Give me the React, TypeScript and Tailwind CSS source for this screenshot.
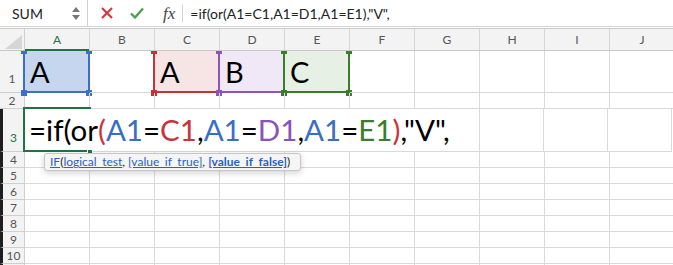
import type { ReactNode } from "react";

const cols = ["A", "B", "C", "D", "E", "F", "G", "H", "I", "J"];
const font = { fontFamily: "Lato, 'Open Sans', sans-serif" };

function Range({ line, fill }: { line: string; fill: string }) {
  // coloured reference box drawn over a cell while editing a formula
  return (
    <>
      <div className={`pointer-events-none absolute -left-[2px] -right-[1px] top-0 -bottom-[1px] border-2 border-t-0 ${line}`} />
      <span className={`absolute -left-[4px] top-0 h-[3px] w-[6px] ${fill}`} />
      <span className={`absolute -right-[3px] top-0 h-[3px] w-[6px] ${fill}`} />
      <span className={`absolute -left-[4px] -bottom-[4px] h-[6px] w-[6px] ${fill}`} />
      <span className={`absolute -right-[3px] -bottom-[4px] h-[6px] w-[6px] ${fill}`} />
    </>
  );
}

function RowHead({ n, h, active, edge, tall }: { n?: number; h: string; active?: boolean; edge?: boolean; tall?: boolean }) {
  return (
    <div
      className={`flex w-[25px] flex-none justify-center border-r border-b border-[#cfcfcf] bg-[#f3f3f3] text-[12px] leading-[14px] ${h} ${
        tall ? "items-end pb-[6px]" : "items-center"
      } ${active ? "text-[#217346]" : "text-[#555]"} ${edge ? "border-l-[3px] border-l-[#1e1e1e]" : ""}`}
    >
      {n}
    </div>
  );
}

function Cell({ className = "", children }: { className?: string; children?: ReactNode }) {
  return <div className={`relative w-[65px] flex-none border-b border-[#dadada] ${className}`}>{children}</div>;
}

function PlainRow({ n }: { n?: number }) {
  return (
    <div className="flex h-[16px]">
      <RowHead n={n} h="h-[16px]" edge />
      {cols.map((c) => (
        <Cell key={c} className="border-r" />
      ))}
    </div>
  );
}

const blue = "text-[#3a6ec6]";
const red = "text-[#c9333b]";
const purple = "text-[#8a52bd]";
const green = "text-[#3b7d2c]";

export default function App() {
  return (
    <div className="relative h-[265px] w-[673px] overflow-hidden bg-white text-[#222]" style={font}>
      {/* formula bar */}
      <div className="flex h-[27px] border-b border-[#d3d3d3]">
        <div className="flex w-[88px] flex-none items-center justify-between border-r border-[#cfcfcf] pl-[12px] pr-[7px] text-[14px]">
          <span>SUM</span>
          <span className="flex flex-col gap-[3px]">
            <svg width="8" height="5" viewBox="0 0 8 5">
              <path d="M4 0 L8 5 L0 5 Z" fill="#777" />
            </svg>
            <svg width="8" height="5" viewBox="0 0 8 5">
              <path d="M0 0 L8 0 L4 5 Z" fill="#777" />
            </svg>
          </span>
        </div>
        <div className="flex items-center pl-[13px]">
          <svg width="12" height="12" viewBox="0 0 12 12">
            <path d="M1 1 L11 11 M11 1 L1 11" stroke="#d5383e" strokeWidth="2.2" />
          </svg>
          <svg className="ml-[17px]" width="14" height="12" viewBox="0 0 14 12">
            <path d="M1 6.5 L5 10.5 L13 1.5" stroke="#4d9e52" strokeWidth="2.4" fill="none" />
          </svg>
          <span className="ml-[19px] text-[17px] italic leading-none text-[#444]" style={{ fontFamily: "'Liberation Serif', serif" }}>
            fx
          </span>
          <span className="ml-[7px] h-[17px] w-px bg-[#d3d3d3]" />
          <span className="ml-[7px] text-[14px] whitespace-nowrap">=if(or(A1=C1,A1=D1,A1=E1),"V",</span>
        </div>
      </div>
      <div className="h-[1px]" />

      {/* column headers */}
      <div className="flex h-[23px] border-y border-[#c8c8c8] bg-[#f3f3f3]">
        <div className="relative w-[25px] flex-none border-r border-[#cfcfcf]">
          <svg className="absolute left-[5px] top-[6px]" width="17" height="14" viewBox="0 0 17 14">
            <path d="M17 0 L17 14 L0 14 Z" fill="#d6d6d6" />
          </svg>
        </div>
        {cols.map((c) => (
          <div
            key={c}
            className={`relative flex w-[65px] flex-none items-center justify-center border-r border-[#d6d6d6] text-[12px] ${
              c === "A" ? "text-[#217346]" : "text-[#555]"
            }`}
          >
            {c}
            {c === "A" && <span className="absolute -bottom-[1px] left-0 right-0 h-[2px] bg-[#217346]" />}
          </div>
        ))}
      </div>

      {/* row 1 */}
      <div className="flex h-[42px] text-[29px] leading-none text-black">
        <RowHead n={1} h="h-[42px]" tall />
        <Cell className="flex items-end border-r bg-[#c6d6ef] pb-[6px] pl-[5px]">
          A
          <Range line="border-[#3c70c8]" fill="bg-[#3c70c8]" />
        </Cell>
        <Cell className="border-r" />
        <Cell className="flex items-end border-r bg-[#f7e5e5] pb-[6px] pl-[5px]">
          A
          <Range line="border-[#c8303a]" fill="bg-[#c8303a]" />
        </Cell>
        <Cell className="flex items-end border-r bg-[#f0e8f6] pb-[6px] pl-[5px]">
          B
          <Range line="border-[#8b55be]" fill="bg-[#8b55be]" />
        </Cell>
        <Cell className="flex items-end border-r bg-[#e7f0e4] pb-[6px] pl-[5px]">
          C
          <Range line="border-[#3b7d2c]" fill="bg-[#3b7d2c]" />
        </Cell>
        {cols.slice(5).map((c) => (
          <Cell key={c} className="border-r" />
        ))}
      </div>

      <div className="flex h-[16px]">
        <RowHead n={2} h="h-[16px]" />
        {cols.map((c) => (
          <Cell key={c} className="border-r" />
        ))}
      </div>

      {/* row 3: cell in edit mode */}
      <div className="flex h-[43px]">
        <RowHead n={3} h="h-[43px]" active edge tall />
        <Cell className="z-10 flex items-end pb-[7px] pl-[4px]">
          <span className="relative z-10 whitespace-nowrap text-[29.5px] leading-none text-black">
            =if(or<span className={red}>(</span>
            <span className={blue}>A1</span>=<span className={red}>C1</span>,<span className={blue}>A1</span>=
            <span className={purple}>D1</span>,<span className={blue}>A1</span>=<span className={green}>E1</span>
            <span className={red}>)</span>,"V",
          </span>
          <div className="absolute -left-[2px] -top-[2px] -bottom-[1px] w-[68px] border-2 border-r-0 border-[#217346]" />
          <span className="absolute -bottom-[4px] left-[62px] h-[6px] w-[6px] border border-white bg-[#217346]" />
        </Cell>
        {cols.slice(1, 7).map((c) => (
          <Cell key={c} />
        ))}
        {cols.slice(7).map((c) => (
          <Cell key={c} className="-ml-px border-l border-r" />
        ))}
      </div>

      {[4, 5, 6, 7, 8, 9, 10].map((n) => (
        <PlainRow key={n} n={n} />
      ))}
      <PlainRow />

      {/* function tooltip */}
      <div className="absolute left-[44px] top-[153px] z-20 flex h-[18px] w-[257px] items-center rounded-[3px] border border-[#c6c6c6] bg-[#f5f5f5] pl-[5px] text-[12px] whitespace-nowrap text-[#222] shadow-[0_2px_6px_rgba(0,0,0,0.18)]">
        <span className="text-[#2a62c4] underline">IF</span>(
        <span className="text-[#2a62c4] underline">logical_test</span>,&nbsp;
        <span className="text-[#2a62c4] underline">[value_if_true]</span>,&nbsp;
        <span className="font-bold text-[#2a62c4] underline">[value_if_false]</span>)
      </div>
    </div>
  );
}
